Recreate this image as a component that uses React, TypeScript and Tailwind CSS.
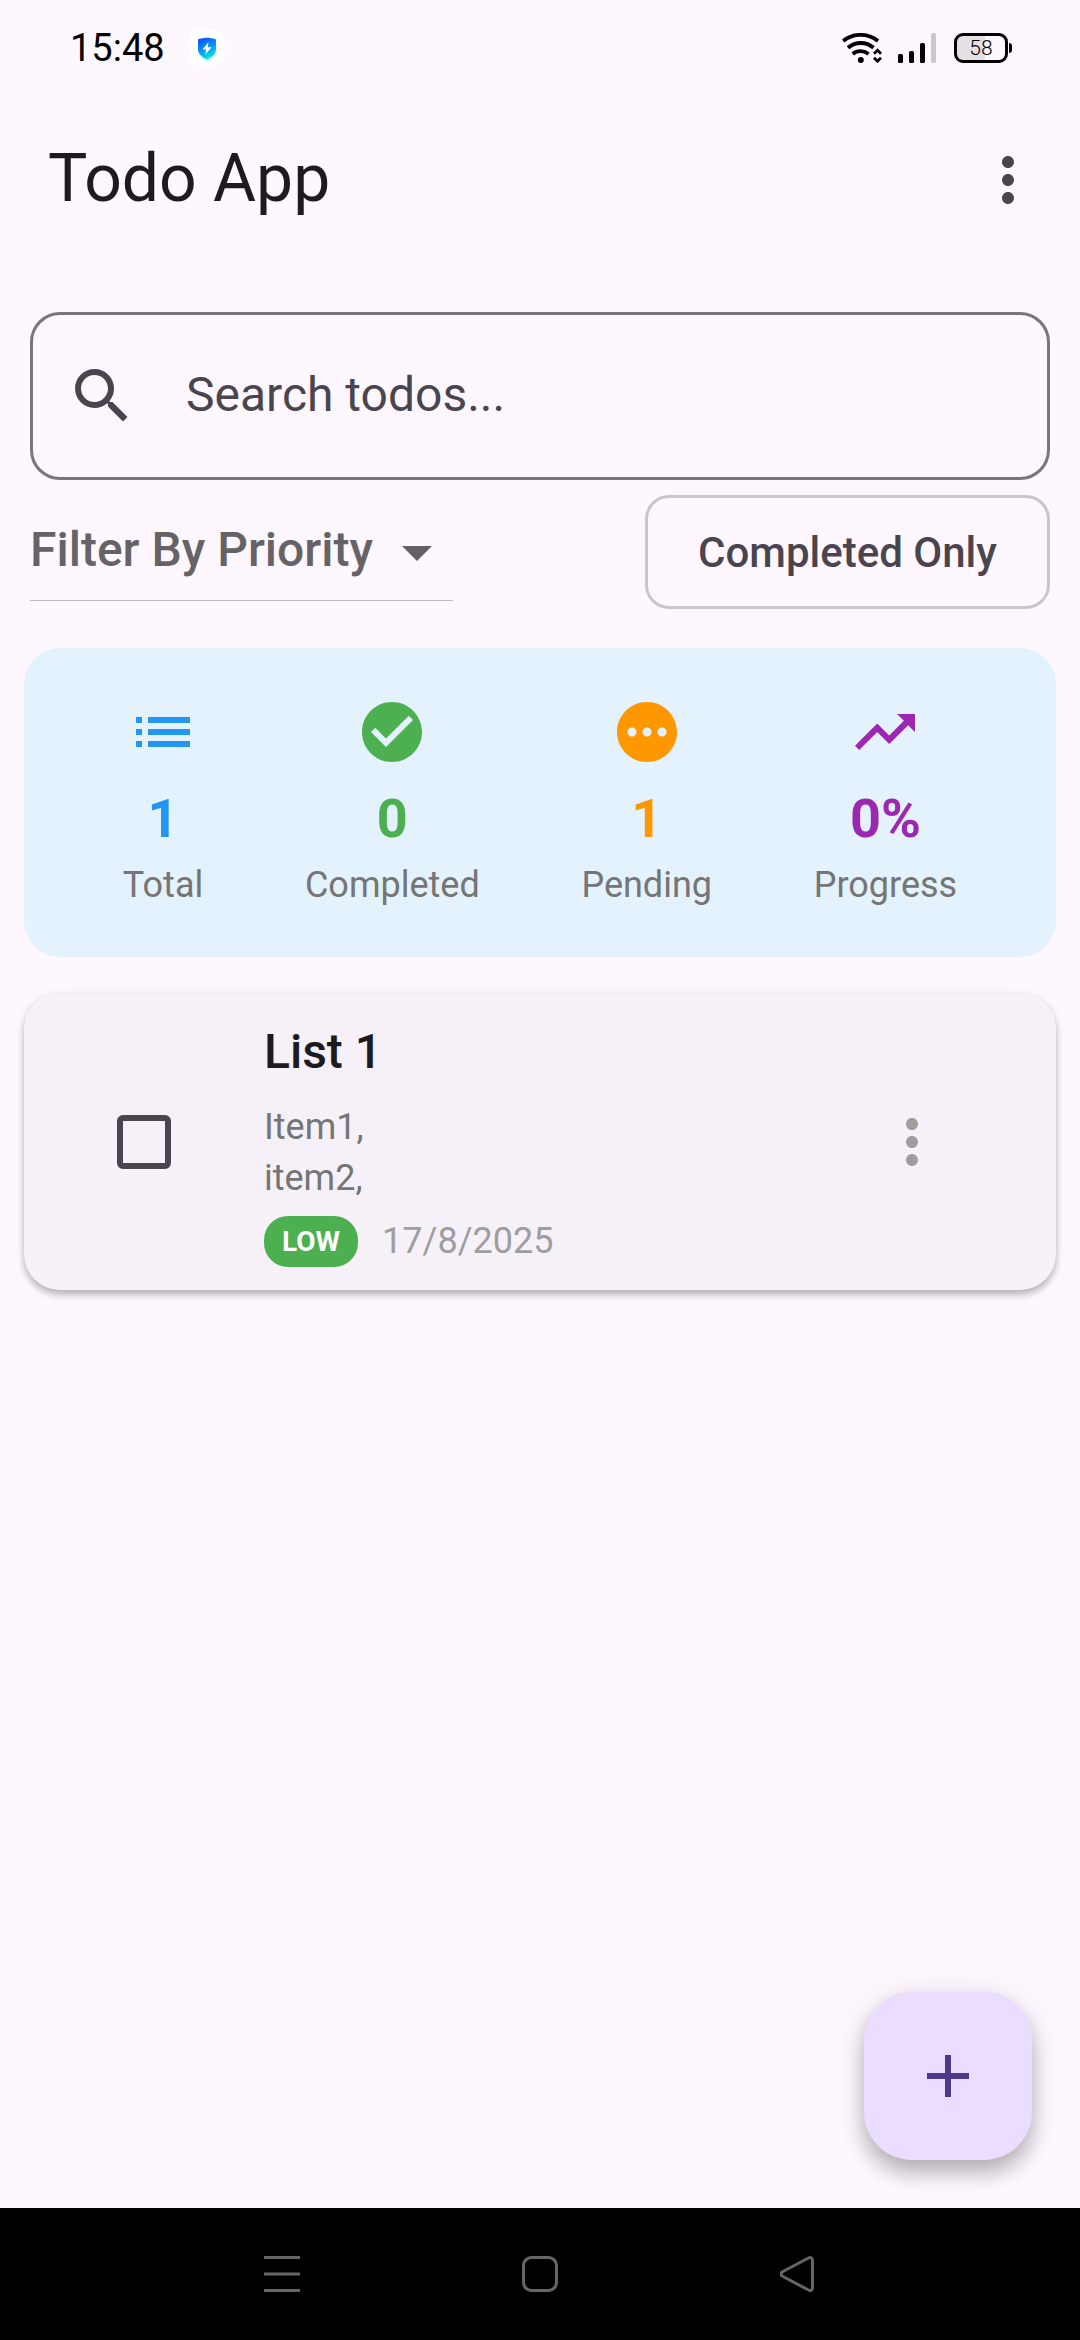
import { useState } from "react";
import {
  MdAdd,
  MdArrowDropDown,
  MdCheckCircle,
  MdList,
  MdMoreVert,
  MdPending,
  MdSearch,
  MdTrendingUp,
} from "react-icons/md";
import type { IconType } from "react-icons";

type Stat = { label: string; value: string; color: string; Icon: IconType };

const stats: Stat[] = [
  { label: "Total", value: "1", color: "text-[#2196f3]", Icon: MdList },
  { label: "Completed", value: "0", color: "text-[#4caf50]", Icon: MdCheckCircle },
  { label: "Pending", value: "1", color: "text-[#ff9800]", Icon: MdPending },
  { label: "Progress", value: "0%", color: "text-[#9c27b0]", Icon: MdTrendingUp },
];

function ShieldIcon() {
  return (
    <svg viewBox="0 0 36 36" className="size-9" aria-hidden="true">
      <defs>
        <linearGradient id="shield" x1="0.2" y1="0" x2="0.6" y2="1">
          <stop offset="0" stopColor="#0a50f0" />
          <stop offset="0.5" stopColor="#0a94f8" />
          <stop offset="1" stopColor="#08ecdc" />
        </linearGradient>
        <filter id="glow" x="-50%" y="-50%" width="200%" height="200%">
          <feGaussianBlur stdDeviation="1.5" />
        </filter>
      </defs>
      <rect width="36" height="36" rx="10" fill="#fff" />
      <path d="M11 14v8c0 4 4 7 7 8.500c3-1.500 7-4.500 7-8.500v-8z" fill="#08ecdc" opacity="0.5" filter="url(#glow)" />
      <path d="M9 10.500c0-1 .6-1.500 1.500-1.700C13 8.400 15 7.700 18 7.700s5 .7 7.500 1.100c.9.200 1.500.7 1.500 1.700V19c0 5-4 8.200-9 10.500C13 27.200 9 24 9 19z" fill="url(#shield)" />
      <path d="M19.500 12l-6 7.500h3.700l-.8 5 6.200-7.300h-3.800z" fill="#fff" />
    </svg>
  );
}

function WifiIcon() {
  return (
    <svg viewBox="0 0 40 30" className="h-[30px] w-10" fill="none" stroke="#000" strokeWidth="3.800" aria-hidden="true">
      <path d="M1.200 8C11-.2 26-.2 36 8" />
      <path d="M6 14.800c7.500-6.400 18-6.400 25.500 0" />
      <path d="M10.700 21c4.500-3.800 11-3.800 15.800 0" />
      <circle cx="18.800" cy="27" r="3" fill="#000" stroke="none" />
      <path d="M32 20.700l3.500-3.500 3.500 3.500M32 24.700l3.500 3.500 3.500-3.500" strokeWidth="2.800" />
    </svg>
  );
}

function SignalIcon() {
  return (
    <svg viewBox="0 0 38 30" className="h-[30px] w-[38px]" aria-hidden="true">
      <rect y="21" width="5" height="9" rx="1.500" />
      <rect x="11" y="18" width="5" height="12" rx="1.500" />
      <rect x="22" y="10" width="5" height="20" rx="1.500" />
      <rect x="33" width="5" height="30" rx="1.500" fill="#cbc6cc" />
    </svg>
  );
}

function Battery() {
  return (
    <div className="flex items-center gap-px">
      <div className="flex h-[30px] w-[54px] items-center justify-center rounded-[9px] border-3 border-black bg-linear-to-r from-[#e5dfe6] from-58% to-transparent to-58% text-[21px] leading-6 font-light">
        58
      </div>
      <div className="h-2.5 w-[3px] rounded-r-sm bg-black" />
    </div>
  );
}

function StatusBar() {
  return (
    <div className="flex h-24 items-center justify-between pr-[68px] pl-[70px] text-black">
      <div className="flex items-center gap-6">
        <span className="text-[38px] leading-10">15:48</span>
        <ShieldIcon />
      </div>
      <div className="flex items-center">
        <div className="mr-4">
          <WifiIcon />
        </div>
        <div className="mr-[18px]">
          <SignalIcon />
        </div>
        <Battery />
      </div>
    </div>
  );
}

function StatsCard() {
  return (
    <section aria-label="Statistics" className="mx-6 flex justify-around rounded-[36px] bg-[#e3f2fd] px-12 pt-12 pb-[46px]">
      {stats.map(({ label, value, color, Icon }) => (
        <div key={label} className="flex flex-col items-center">
          <Icon className={`size-[72px] ${color}`} />
          <span className={`mt-3 text-[54px] leading-[77px] font-bold ${color}`}>{value}</span>
          <span className="mt-0.5 text-4xl leading-[52px] text-[#757575]">{label}</span>
        </div>
      ))}
    </section>
  );
}

function TodoCard() {
  const [done, setDone] = useState(false);
  return (
    <article className="mx-6 mt-9 flex items-center rounded-[36px] bg-[#f6f1f9] py-[23px] pr-[72px] pl-[93px] shadow-[0_5px_7px_rgba(0,0,0,0.24),0_1px_9px_rgba(0,0,0,0.08)]">
      <input
        id="todo-1"
        type="checkbox"
        checked={done}
        onChange={(e) => setDone(e.target.checked)}
        className="size-[54px] shrink-0 appearance-none rounded-md border-6 border-[#49454f] checked:bg-[#49454f]"
      />
      <div className="ml-[93px] flex-1">
        <label htmlFor="todo-1" className="block text-5xl leading-[72px] font-medium text-[#1d1b20]">
          List 1
        </label>
        <p className="mt-3.5 text-4xl leading-[51px] whitespace-pre-line text-[#757575]">{"Item1,\nitem2,"}</p>
        <div className="mt-3 flex items-center gap-6">
          <span className="rounded-3xl bg-[#4caf50] px-[18px] text-[28px] leading-[51px] font-bold text-white">LOW</span>
          <time dateTime="2025-08-17" className="text-4xl leading-[51px] text-[#9e9e9e]">
            17/8/2025
          </time>
        </div>
      </div>
      <button type="button" aria-label="Todo options" className="flex size-36 items-center justify-center">
        <MdMoreVert className="size-[72px] text-[#9e9e9e]" />
      </button>
    </article>
  );
}

function NavBar() {
  return (
    <nav aria-label="System" className="flex h-33 items-center justify-center gap-[222px] bg-black text-[#666]">
      <button type="button" aria-label="Recent apps">
        <svg viewBox="0 0 36 36" className="size-9" stroke="currentColor" strokeWidth="3" aria-hidden="true">
          <path d="M0 1.500h36M0 18h36M0 34.500h36" />
        </svg>
      </button>
      <button type="button" aria-label="Home">
        <svg viewBox="0 0 36 36" className="size-9" fill="none" stroke="currentColor" strokeWidth="3" aria-hidden="true">
          <rect x="1.500" y="1.500" width="33" height="33" rx="8" />
        </svg>
      </button>
      <button type="button" aria-label="Back">
        <svg viewBox="0 0 36 36" className="size-9" fill="none" stroke="currentColor" strokeWidth="3" strokeLinejoin="round" aria-hidden="true">
          <path d="M2.500 15.800L28.500 2c2-1 4 0 4 2.300v27.400c0 2.300-2 3.300-4 2.300L2.500 20.200c-1.800-1-1.800-3.400 0-4.400z" />
        </svg>
      </button>
    </nav>
  );
}

export default function App() {
  const [completedOnly, setCompletedOnly] = useState(false);
  return (
    <div className="flex min-h-screen flex-col bg-[#fef7ff] font-[Roboto,sans-serif]">
      <StatusBar />
      <header className="flex h-42 items-center justify-between pl-12">
        <h1 className="pb-0.5 text-[66px] leading-[84px] text-[#1d1b20]">Todo App</h1>
        <button type="button" aria-label="More options" className="flex size-36 items-center justify-center">
          <MdMoreVert className="size-[72px] text-[#49454f]" />
        </button>
      </header>

      <main className="flex flex-1 flex-col pt-12">
        <label className="mx-[30px] flex h-42 items-center gap-12 rounded-[30px] border-3 border-[#79747e] px-[33px] text-[#49454f]">
          <MdSearch className="size-[72px] shrink-0" />
          <input
            type="search"
            aria-label="Search todos"
            placeholder="Search todos..."
            className="min-w-0 flex-1 bg-transparent pb-0.5 text-5xl leading-[72px] outline-none placeholder:text-[#49454f]"
          />
        </label>

        <div className="mx-[30px] mt-[15px] mb-[39px] flex items-start justify-between">
          <div className="relative w-[423px] border-b border-[#bfbac0]">
            <select
              aria-label="Filter By Priority"
              className="block h-[105px] w-full appearance-none bg-transparent pt-1 text-5xl leading-[72px] font-medium text-[#666366] outline-none"
            >
              <option>Filter By Priority</option>
              <option>Low</option>
              <option>Medium</option>
              <option>High</option>
            </select>
            <MdArrowDropDown className="pointer-events-none absolute right-0 bottom-3 size-[72px] text-[#616161]" />
          </div>
          <button
            type="button"
            aria-pressed={completedOnly}
            onClick={() => setCompletedOnly(!completedOnly)}
            className="h-[114px] w-[405px] rounded-3xl border-3 border-[#cac4d0] pt-0.5 text-[42px] leading-[60px] font-medium text-[#49454f]"
          >
            Completed Only
          </button>
        </div>

        <StatsCard />
        <TodoCard />

        <button
          type="button"
          aria-label="Add todo"
          className="mt-auto mr-12 mb-12 flex size-42 items-center justify-center self-end rounded-[48px] bg-[#eaddff] shadow-[0_14px_20px_rgba(0,0,0,0.22),0_4px_30px_rgba(0,0,0,0.12)]"
        >
          <MdAdd className="size-[72px] text-[#4f378a]" />
        </button>
      </main>
      <NavBar />
    </div>
  );
}
